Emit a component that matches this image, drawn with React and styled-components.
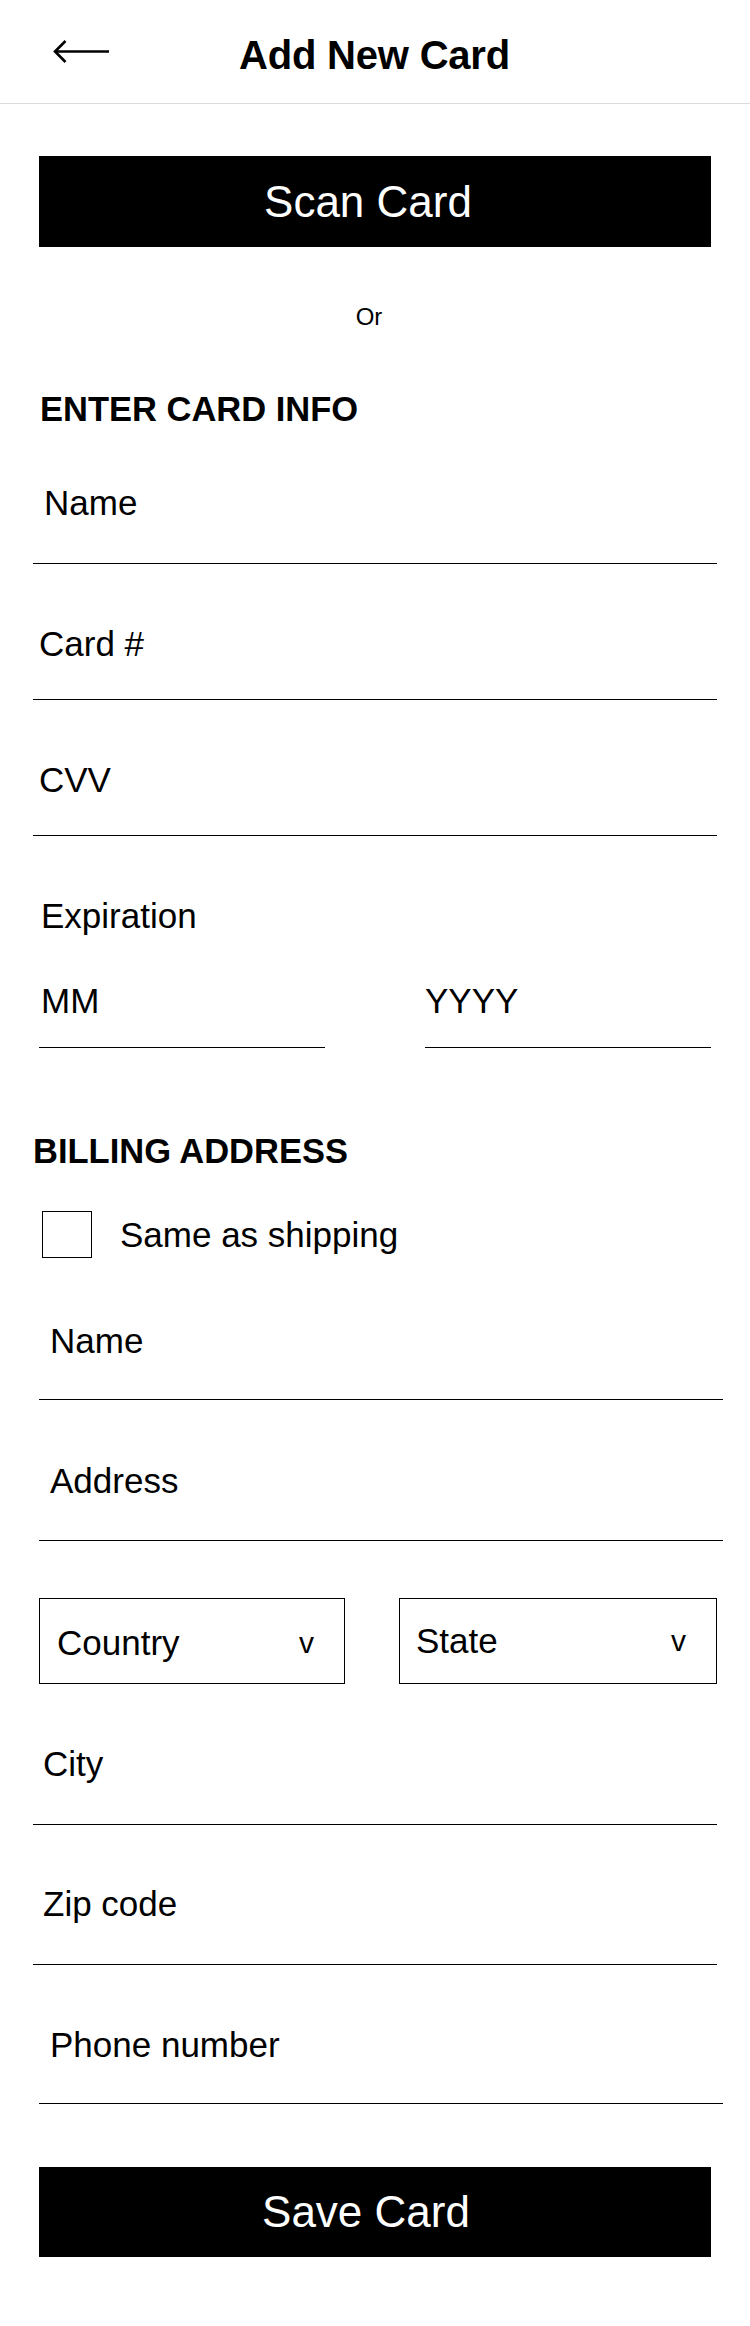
import React from 'react';
import styled, { createGlobalStyle } from 'styled-components';

const GlobalStyle = createGlobalStyle`
  body {
    margin: 0;
    background: #fff;
    font-family: "Liberation Sans", Arial, sans-serif;
    color: #000;
  }
`;

const Page = styled.div`
  width: 750px;
  min-height: 2326px;
  display: flex;
  flex-direction: column;
  padding-bottom: 69px;
  box-sizing: border-box;
`;

const Header = styled.header`
  height: 103px;
  border-bottom: 1px solid #dcdcdc;
  display: flex;
  align-items: center;
  box-sizing: content-box;
`;

const BackButton = styled.button`
  border: 0;
  background: none;
  padding: 0;
  margin-left: 53px;
  width: 60px;
  height: 30px;
  display: flex;
  align-items: center;
  cursor: pointer;
`;

const Title = styled.h1`
  margin: 6px 0 0 126px;
  font-size: 40px;
  font-weight: 700;
  line-height: 40px;
  letter-spacing: -0.2px;
`;

const BlackButton = styled.button`
  margin: ${(p) => p.$mt}px 39px 0;
  height: ${(p) => p.$h}px;
  border: 0;
  background: #000;
  color: #fff;
  font-family: "Liberation Sans", Arial, sans-serif;
  font-size: 44px;
  font-weight: 400;
  display: flex;
  align-items: center;
  justify-content: center;
  padding: 0 ${(p) => p.$shift}px 0 0;
`;

const OrText = styled.div`
  margin-top: 56px;
  text-align: center;
  font-size: 24px;
  line-height: 28px;
  padding-right: 12px;
`;

const SectionTitle = styled.h2`
  margin: ${(p) => p.$mt}px 0 0 ${(p) => p.$x}px;
  font-size: 34.5px;
  font-weight: 700;
  line-height: 34px;
`;

const Field = styled.div`
  margin: 0 ${(p) => 750 - p.$right}px 0 ${(p) => p.$left}px;
  padding: ${(p) => p.$pt}px 0 ${(p) => p.$pb}px ${(p) => p.$indent}px;
  border-bottom: 1px solid #000;
`;

const Label = styled.div`
  font-size: 35px;
  line-height: 40px;
`;

const Plain = styled.div`
  margin: ${(p) => p.$mt}px 0 0 41px;
  font-size: 35px;
  line-height: 40px;
`;

const Pair = styled.div`
  display: flex;
  justify-content: space-between;
  margin: 45px 39px 0;
`;

const HalfField = styled.div`
  width: 286px;
  padding: 0 0 26px ${(p) => p.$indent}px;
  box-sizing: border-box;
  border-bottom: 1px solid #000;
  font-size: 35px;
  line-height: 40px;
`;

const CheckRow = styled.label`
  display: flex;
  align-items: center;
  margin: 43px 0 0 42px;
  gap: 28px;
  font-size: 35px;
  line-height: 40px;
`;

const CheckBox = styled.span`
  width: 50px;
  height: 47px;
  box-sizing: border-box;
  border: 1.5px solid #000;
`;

const SelectRow = styled.div`
  display: flex;
  justify-content: space-between;
  margin: 57px 33px 0 39px;
`;

const Select = styled.div`
  width: ${(p) => p.$w}px;
  height: 86px;
  box-sizing: border-box;
  border: 1px solid #000;
  display: flex;
  align-items: center;
  justify-content: space-between;
  padding: ${(p) => p.$pt}px 30px 0 ${(p) => p.$indent}px;
  font-size: 35px;
  line-height: 40px;
`;

const Chevron = styled.span`
  font-size: 30px;
  line-height: 30px;
`;

function ArrowLeft() {
  return (
    <svg width="56" height="24" viewBox="0 0 56 24" fill="none">
      <path d="M2 11.5 H56" stroke="#000" strokeWidth="2.6" />
      <path d="M12.5 1 L2 11.5 L12.5 22" stroke="#000" strokeWidth="2.6" />
    </svg>
  );
}

function App() {
  return (
    <Page>
      <GlobalStyle />
      <Header>
        <BackButton aria-label="Back">
          <ArrowLeft />
        </BackButton>
        <Title>Add New Card</Title>
      </Header>

      <BlackButton $mt={52} $h={91} $shift={14}>Scan Card</BlackButton>
      <OrText>Or</OrText>

      <SectionTitle $mt={61} $x={40}>ENTER CARD INFO</SectionTitle>
      <Field $left={33} $right={717} $indent={11} $pt={57} $pb={40}>
        <Label>Name</Label>
      </Field>
      <Field $left={33} $right={717} $indent={6} $pt={60} $pb={35}>
        <Label>Card #</Label>
      </Field>
      <Field $left={33} $right={717} $indent={6} $pt={60} $pb={35}>
        <Label>CVV</Label>
      </Field>

      <Plain $mt={60}>Expiration</Plain>
      <Pair>
        <HalfField $indent={2}>MM</HalfField>
        <HalfField $indent={0}>YYYY</HalfField>
      </Pair>

      <SectionTitle $mt={86} $x={33}>BILLING ADDRESS</SectionTitle>
      <CheckRow>
        <CheckBox />
        <span>Same as shipping</span>
      </CheckRow>

      <Field $left={39} $right={723} $indent={11} $pt={63} $pb={38}>
        <Label>Name</Label>
      </Field>
      <Field $left={39} $right={723} $indent={11} $pt={61} $pb={39}>
        <Label>Address</Label>
      </Field>

      <SelectRow>
        <Select $w={306} $indent={17} $pt={3}>
          <span>Country</span>
          <Chevron>v</Chevron>
        </Select>
        <Select $w={318} $indent={16} $pt={0}>
          <span>State</span>
          <Chevron>v</Chevron>
        </Select>
      </SelectRow>

      <Field $left={33} $right={717} $indent={10} $pt={60} $pb={40}>
        <Label>City</Label>
      </Field>
      <Field $left={33} $right={717} $indent={10} $pt={59} $pb={40}>
        <Label>Zip code</Label>
      </Field>
      <Field $left={39} $right={723} $indent={11} $pt={60} $pb={38}>
        <Label>Phone number</Label>
      </Field>

      <BlackButton $mt={63} $h={90} $shift={18}>Save Card</BlackButton>
    </Page>
  );
}

export default App;
